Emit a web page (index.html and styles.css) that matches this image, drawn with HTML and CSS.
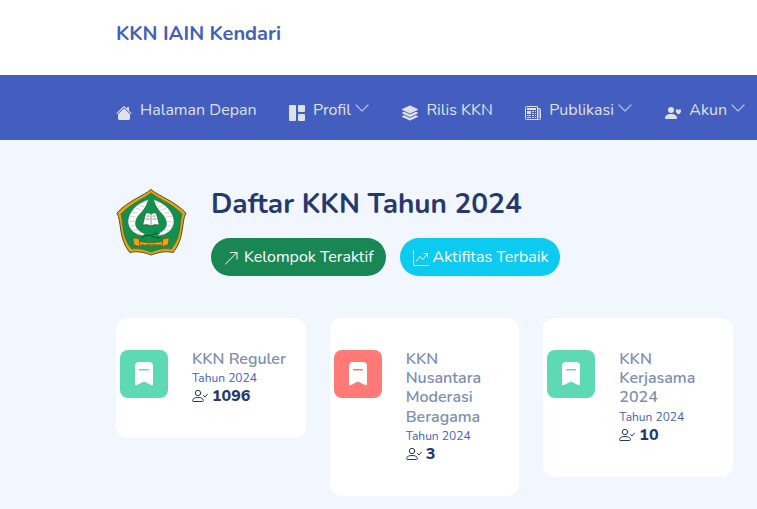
FILE: index.html
```html
<!DOCTYPE html>
<html lang="id">
<head>
<meta charset="utf-8">
<meta name="viewport" content="width=device-width, initial-scale=1">
<title>KKN IAIN Kendari</title>
<link rel="stylesheet" href="styles.css">
</head>
<body>
<svg class="sprite" aria-hidden="true">
  <symbol id="chevron" viewBox="0 0 16 16"><path d="M2 5l6 6 6-6" fill="none" stroke="currentColor" stroke-width="1.300" stroke-linecap="round" stroke-linejoin="round"/></symbol>
  <symbol id="bookmark" viewBox="0 0 24 24"><path fill-rule="evenodd" d="M7 0h10q4 0 4 4v18q0 2-2 1l-7-3.500-7 3.500q-2 1-2-1V4q0-4 4-4zM7.700 7a.8.8 0 0 0 0 1.600h8.600a.8.8 0 0 0 0-1.600z"/></symbol>
  <symbol id="person-check" viewBox="0 0 16 16"><g fill="none" stroke="currentColor" stroke-linecap="round" stroke-linejoin="round"><circle cx="6" cy="5" r="2.700"/><path d="M1.500 13.500h9q1 0 1-1c-.5-2-2-3-5.500-3s-5 1-5.500 3q0 1 1 1zM11.500 7.500L13 9l2.500-3"/></g></symbol>
</svg>
<header class="header">
  <a class="brand" href="#">KKN IAIN Kendari</a>
</header>
<nav class="nav">
  <ul class="menu">
    <li><a href="#"><svg class="icon" viewBox="0 0 16 16"><path d="M8.700 1.500a1 1 0 0 0-1.400 0L.6 8.100a.5.5 0 0 0 .7.7L8 2.200l6.700 6.600a.5.500 0 0 0 .7-.7L13 5.800V2.500a.5.5 0 0 0-.5-.5h-1a.5.5 0 0 0-.5.500v1.300z"/><path d="M8 3.300l6 6v4.200a1.500 1.500 0 0 1-1.500 1.500h-9A1.500 1.500 0 0 1 2 13.500V9.300z"/></svg><span>Halaman Depan</span></a></li>
    <li><a href="#"><svg class="icon" viewBox="0 0 16 16"><rect width="7" height="16" rx="1"/><rect x="9" width="7" height="7" rx="1"/><rect x="9" y="9" width="7" height="7" rx="1"/></svg><span>Profil</span><svg class="chevron"><use href="#chevron"/></svg></a></li>
    <li><a href="#"><svg class="icon" viewBox="0 0 16 16"><path d="M7.800.6a.5.5 0 0 1 .4 0l7.500 3.500a.5.5 0 0 1 0 .9L8.200 8.400a.5.5 0 0 1-.4 0L.3 5a.5.5 0 0 1 0-.9z"/><path d="M2.100 6.700l5.300 2.500a1.500 1.500 0 0 0 1.200 0l5.300-2.500 1.800.9a.5.5 0 0 1 0 .9l-7.500 3.400a.5.5 0 0 1-.4 0L.3 8.500a.5.5 0 0 1 0-.9z"/><path d="M2.100 10.200l5.300 2.500a1.500 1.500 0 0 0 1.200 0l5.300-2.500 1.800.9a.5.5 0 0 1 0 .9l-7.500 3.400a.5.5 0 0 1-.4 0L.3 12a.5.5 0 0 1 0-.9z"/></svg><span>Rilis KKN</span></a></li>
    <li><a href="#"><svg class="icon" viewBox="0 0 16 16"><path d="M1.500 1.500h11v13h-11a1 1 0 0 1-1-1v-11a1 1 0 0 1 1-1zM12.500 3.500h2a1 1 0 0 1 1 1v9a1 1 0 0 1-1 1h-2M14 4v9" fill="none" stroke="currentColor"/><path d="M2 3h9v2H2zM2 6h4v3H2zM2 10h4v1H2zM2 12h4v1H2zM7 6h2v1H7zM10 6h1v1h-1zM7 8h2v1H7zM10 8h1v1h-1zM7 10h2v1H7zM10 10h1v1h-1zM7 12h2v1H7zM10 12h1v1h-1z"/></svg><span>Publikasi</span><svg class="chevron"><use href="#chevron"/></svg></a></li>
    <li><a href="#"><svg class="icon" viewBox="0 0 16 16"><circle cx="6" cy="5" r="3"/><path d="M6 9c4 0 6 2 6 4q0 1-1 1H1q-1 0-1-1c0-2 2-4 6-4zM13.500 5c1.800-2 5 .5 0 4.500-5-4-1.800-6.500 0-4.500z"/></svg><span>Akun</span><svg class="chevron"><use href="#chevron"/></svg></a></li>
  </ul>
</nav>
<main class="main">
  <section class="intro">
    <svg class="logo" viewBox="0 0 72 68" role="img" aria-label="Logo IAIN Kendari">
      <path d="M35.500 1C42 7 60 13 71 25 66 33 70 50 58 65 50 63 42 65 35.500 67.500 29 65 22 63 14 65 2 50 6 33 1 25 11 13 29 7 35.500 1z" fill="#dba617" stroke="#514a2a"/>
      <path d="M35.500 4.500C42 10 58 16 67 26 64 35 67 48 56 61.500 48 60 42 62 35.500 64.500 29 62 23 60 16 61.500 5 48 8 35 5 26 14 16 29 10 35.500 4.500z" fill="#11914d" stroke="#605a1d" stroke-width=".7"/>
      <g id="wreath"><path d="M33 11C20 15 12 25 12 34c1 9 8 13 15 14l3-2c-7-2-11-7-10-12 1-8 10-10 13-23z" fill="#fff" stroke="#316d4b" stroke-width=".7"/><path d="M31 15l-4-1M29 19l-6-2M26 22l-6-2M22 25l-6-1M20 29l-6-1M19 33l-6 1M19 37l-5 2M22 41l-5 2M26 44l-4 3" stroke="#a9b8b0" stroke-width=".6"/></g>
      <use href="#wreath" transform="matrix(-1 0 0 1 71 0)"/>
      <path d="M26 50q6-4 9.500-2 4 3 10 2M35.500 48q4-4 9-2" fill="none" stroke="#164c2d"/>
      <path d="M30 25q4-1 5.500 1 2-2 5.500-1l3 12q-6-1-8.500 1-3-2-8.500-1z" fill="#fff" stroke="#355644" stroke-width=".8"/><path d="M35.500 26v11M31 28h3M30 31h4M37 28h3M37 31h4" fill="none" stroke="#667c70" stroke-width=".8"/>
      <path d="M17 50l6 1 2 3q10 2 21 0l2-3 6-1-1 7-6 2-2-2q-9 3-19 0l-2 2-6-2z" fill="#e2a51b" stroke="#70570e" stroke-width=".8"/><path d="M24 52v6M47 52v6M31 57q5 1 9 0" fill="none" stroke="#705610"/>
    </svg>
    <div>
      <h1>Daftar KKN Tahun 2024</h1>
      <div class="actions">
        <button class="button active" type="button"><svg class="glyph" viewBox="0 0 16 16"><path d="M1.500 14L13 2.500M6.500 2.500H13V9" fill="none" stroke="currentColor" stroke-linecap="round" stroke-linejoin="round"/></svg>Kelompok Teraktif</button>
        <button class="button best" type="button"><svg class="glyph" viewBox="0 0 16 16"><path d="M.5 0v15.500H16M3 11.500l4-5 3 3 4.500-6M10.500 3.500h4v4" fill="none" stroke="currentColor"/></svg>Aktifitas Terbaik</button>
      </div>
    </div>
  </section>
  <section class="cards">
    <article class="card"><div class="badge green"><svg><use href="#bookmark"/></svg></div><div class="info"><h2>KKN Reguler</h2><p class="year">Tahun 2024</p><p class="count"><svg><use href="#person-check"/></svg>1096</p></div></article>
    <article class="card"><div class="badge red"><svg><use href="#bookmark"/></svg></div><div class="info"><h2>KKN Nusantara Moderasi Beragama</h2><p class="year">Tahun 2024</p><p class="count"><svg><use href="#person-check"/></svg>3</p></div></article>
    <article class="card"><div class="badge green"><svg><use href="#bookmark"/></svg></div><div class="info"><h2>KKN Kerjasama 2024</h2><p class="year">Tahun 2024</p><p class="count"><svg><use href="#person-check"/></svg>10</p></div></article>
  </section>
</main>
</body>
</html>
```
FILE: styles.css
```css
* { box-sizing: border-box; }
body {
  margin: 0;
  min-height: 100vh;
  background: #f2f7ff;
  color: #25396f;
  font: 400 16px/24px Nunito, "Open Sans", "Noto Sans", sans-serif;
}
h1, h2, p, ul { margin: 0; padding: 0; }
svg { flex: none; fill: currentColor; }
.sprite { position: absolute; width: 0; height: 0; }
.header { padding: 19px 24px 26px 116px; background: #fff; }
.brand { display: block; color: #435ebe; font-size: 20px; line-height: 30px; font-weight: 700; text-decoration: none; }
.nav { padding: 23px 11px 18px 116px; background: #435ebe; }
.menu { display: flex; justify-content: space-between; list-style: none; }
.menu a { display: flex; align-items: center; color: #dee2e6; text-decoration: none; white-space: nowrap; font-size: 16px; line-height: 24px; }
.icon { width: 16px; height: 16px; margin: 6px 8px 0 0; }
.chevron { width: 16px; height: 16px; margin: 0 0 4px 3px; opacity: .7; }
.main { padding: 48px 24px 13px 116px; }
.intro { display: flex; gap: 24px; }
.logo { width: 71px; height: 68px; }
h1 { font-size: 28px; line-height: 32px; font-weight: 700; }
.actions { display: flex; gap: 14px; margin-top: 18px; }
.button { display: flex; align-items: center; padding: 7px 12px 7px 13px; border: 0; border-radius: 20px; color: #fff; font: inherit; white-space: nowrap; }
.active { background: #198754; }
.best { background: #0dcaf0; }
.glyph { width: 16px; height: 16px; margin: 2px 4px 0 0; }
.cards { display: grid; grid-template-columns: repeat(3, 1fr); align-items: start; gap: 24px; margin-top: 42px; }
.card { display: flex; gap: 24px; padding: 32px 16px 32px 4px; border-radius: 12px; background: #fff; }
.badge { display: grid; place-items: center; flex: none; width: 48px; height: 48px; border-radius: 8px; color: #fff; }
.badge svg { width: 24px; height: 24px; }
.green { background: #5ddab4; }
.red { background: #ff7976; }
h2 { color: #7c8db5; font-size: 16px; line-height: 1.2; font-weight: 600; }
.year { color: #435ebe; font-size: 12px; line-height: 19px; }
.count { display: flex; align-items: flex-start; gap: 4px; padding-bottom: 2px; font-weight: 800; line-height: 16px; }
.count svg { width: 16px; height: 16px; }
```
